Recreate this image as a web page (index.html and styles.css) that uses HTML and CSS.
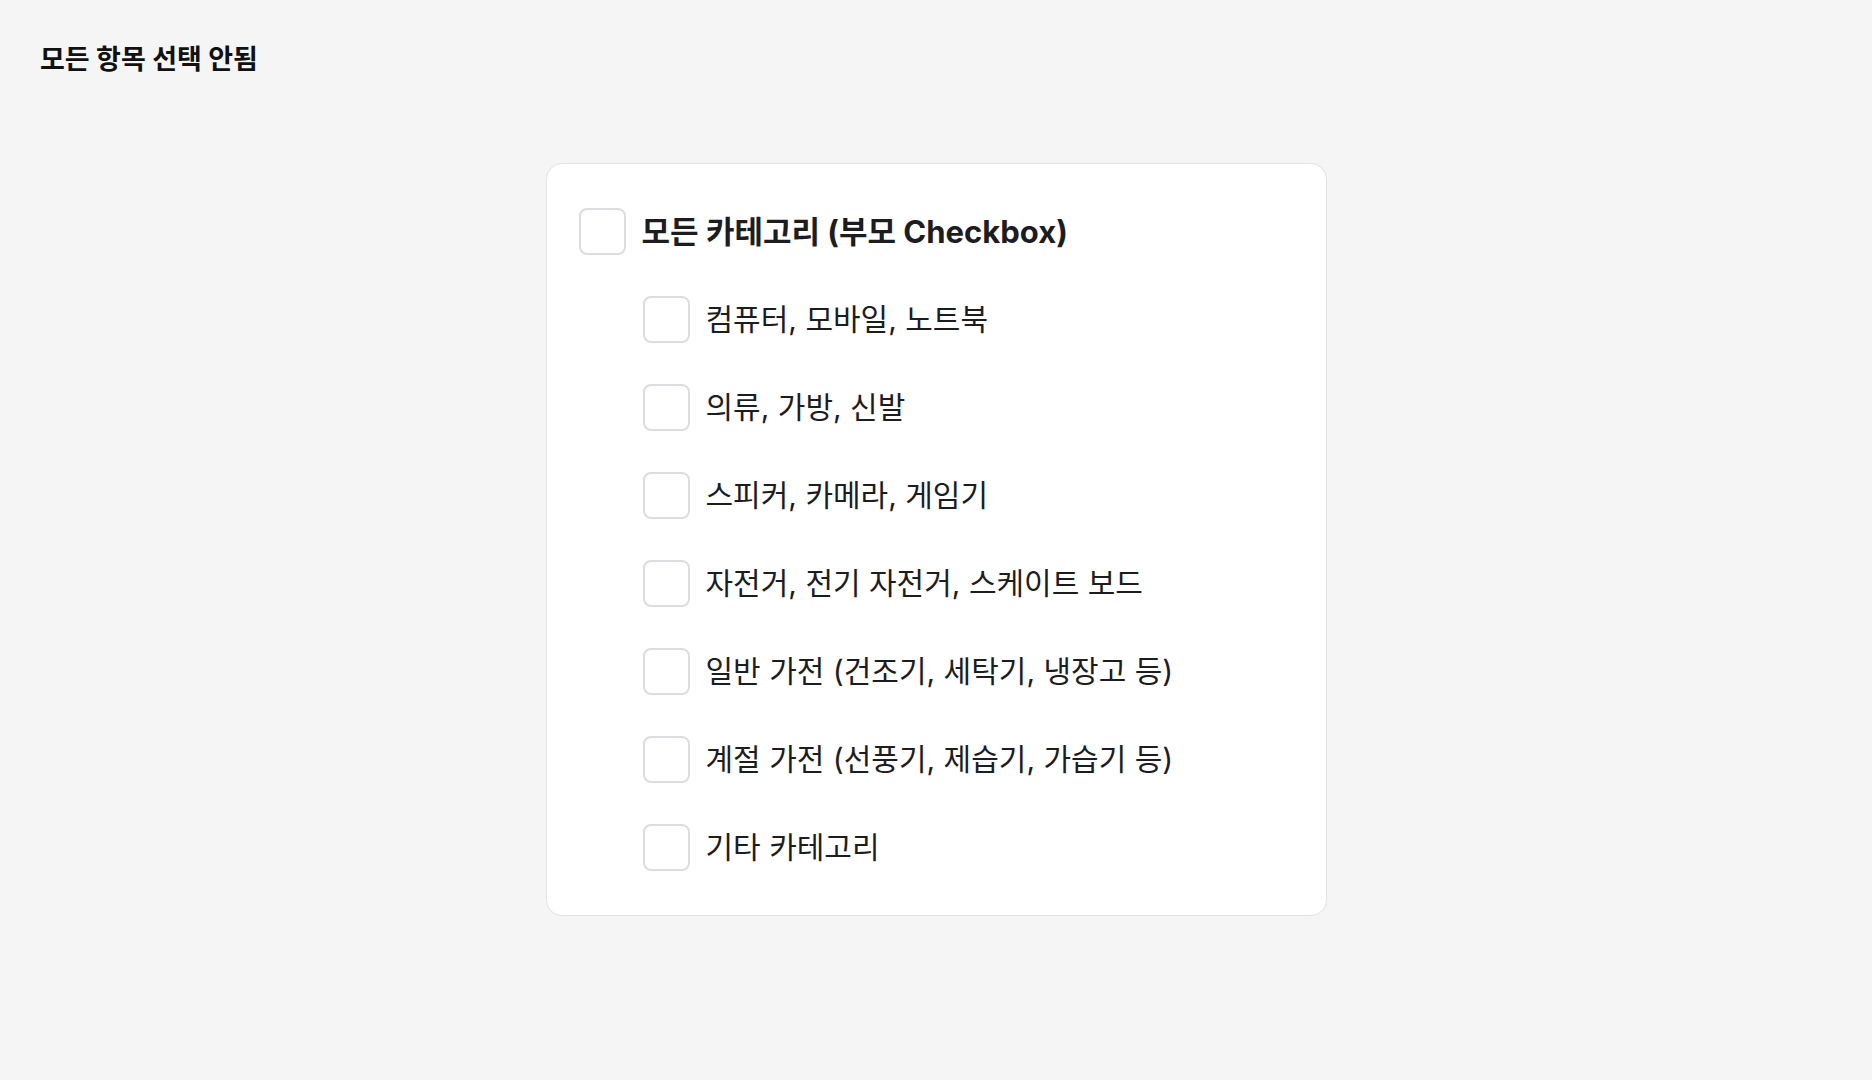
FILE: index.html
```html
<!DOCTYPE html>
<html lang="ko">
<head>
<meta charset="UTF-8">
<meta name="viewport" content="width=device-width, initial-scale=1.0">
<title>Checkbox</title>

<link rel="stylesheet" href="styles.css">
</head>
<body>

    <h1 class="status">모든 항목 선택 안됨</h1>

    <div class="card">
        <label class="check-row parent">
          <input type="checkbox" class="check">
          <span>모든 카테고리 (부모 Checkbox)</span>
        </label>

        <div class="children">
          <label class="check-row"><input type="checkbox" class="check"><span>컴퓨터, 모바일, 노트북</span></label>
          <label class="check-row"><input type="checkbox" class="check"><span>의류, 가방, 신발</span></label>
          <label class="check-row"><input type="checkbox" class="check"><span>스피커, 카메라, 게임기</span></label>
          <label class="check-row"><input type="checkbox" class="check"><span>자전거, 전기 자전거, 스케이트 보드</span></label>
          <label class="check-row"><input type="checkbox" class="check"><span>일반 가전 (건조기, 세탁기, 냉장고 등)</span></label>
          <label class="check-row"><input type="checkbox" class="check"><span>계절 가전 (선풍기, 제습기, 가습기 등)</span></label>
          <label class="check-row"><input type="checkbox" class="check"><span>기타 카테고리</span></label>
        </div>
    </div>

</body>
</html>
```

FILE: styles.css
```css
body {
  margin: 0;
  padding: 42px 40px;
  background-color: #f5f5f5;
  font-family: Inter, "Noto Sans CJK KR", sans-serif;
  color: #1d1d1f;
}

.status {
  margin: 0 0 85px;
  font-size: 27px;
  line-height: 36px;
  font-weight: 700;
  color: #111;
}

.card {
  width: 781px;
  box-sizing: border-box;
  margin: 0 auto;
  padding: 44px 32px;
  background-color: #fff;
  border: 1px solid #e2e2e2;
  border-radius: 16px;
  display: flex;
  flex-direction: column;
  gap: 41px;
}

.children {
  display: flex;
  flex-direction: column;
  gap: 41px;
  padding-left: 64px;
}

.check-row {
  display: flex;
  align-items: center;
  gap: 16px;
  font-size: 30px;
  line-height: 47px;
  cursor: pointer;
}

.check-row.parent {
  font-size: 31px;
  font-weight: 700;
}

.check {
  appearance: none;
  -webkit-appearance: none;
  margin: 0;
  flex: none;
  width: 47px;
  height: 47px;
  box-sizing: border-box;
  border: 2px solid #dcdce1;
  border-radius: 8px;
  background-color: #fff;
  cursor: pointer;
}
```
